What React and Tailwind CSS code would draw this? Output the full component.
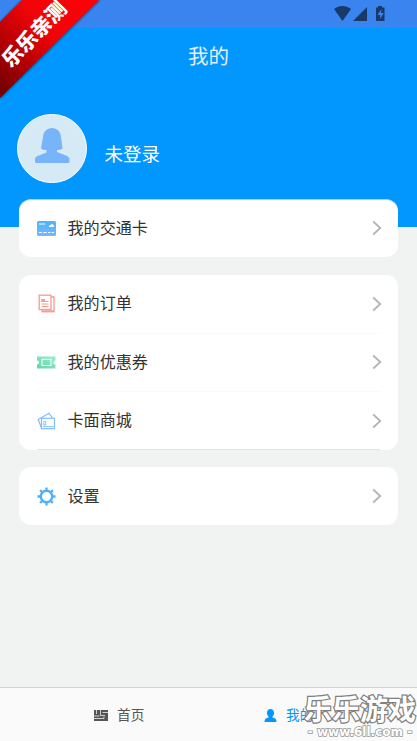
import React from 'react';

const CardIcon = () => (
  <svg className="w-[19px] h-[15px]" viewBox="0 0 19 15">
    <defs>
      <linearGradient id="cardFill" x1="0" y1="0" x2="0" y2="1">
        <stop offset="0" stopColor="#4db4f8" />
        <stop offset="1" stopColor="#78b6fb" />
      </linearGradient>
    </defs>
    <rect width="19" height="15" rx="1.5" fill="url(#cardFill)" />
    <path d="M2 3h6M2 11.5h3M6.5 11.5h3M11 11.5h2.5M14.700 11.500h2.300" stroke="#fff" strokeWidth="1.1" />
    <path d="M12 5.500c0-1.500 1.500-1.500 2-1.500 0-1.500 2-1.500 2 0 1.500 0 1.500 2 0 2h-3.500z" fill="#fff" />
  </svg>
);

const OrderIcon = () => (
  <svg className="w-[19px] h-[19px]" viewBox="0 0 19 19" fill="none" stroke="#f79a90">
    <path d="M14 3h3v14.500H5v-2" strokeWidth="1.300" />
    <path d="M5 17.300h12" strokeWidth="1.800" />
    <rect x="2.200" y="1.200" width="11.800" height="14.300" strokeWidth="1.300" />
    <path d="M4.500 5.500H8M4.500 7.500h7M4.500 10h7M4.500 12.500h7" strokeWidth="1.200" />
    <rect x="4.500" y="5" width="3.500" height="3" fill="#f79a90" stroke="none" />
  </svg>
);

const CouponIcon = () => (
  <svg className="w-[19px] h-[13px]" viewBox="0 0 19 13">
    <defs>
      <linearGradient id="couponFill" x1="1" y1="0" x2="0" y2="1">
        <stop offset="0" stopColor="#9decd0" />
        <stop offset="1" stopColor="#5fd6a7" />
      </linearGradient>
    </defs>
    <path d="M0 .5h18.500v4a2 2 0 0 0 0 4v4H0v-4a2 2 0 0 0 0-4z" fill="url(#couponFill)" />
    <rect x="5" y="3.300" width="9" height="6.200" fill="none" stroke="#fff" />
  </svg>
);

const MallIcon = () => (
  <svg className="w-[19px] h-[18px]" viewBox="0 0 19 18" fill="none" stroke="#80bdfa" strokeWidth="1.200">
    <path d="M4.500 16 1.200 7.500 12 1.200l3.500 5" />
    <rect x="4.500" y="6.300" width="13" height="10.400" />
    <rect x="6.800" y="9.700" width="2" height="3.300" strokeWidth=".9" />
    <path d="M6 14.700h10.500" strokeWidth="1" />
  </svg>
);

const GearIcon = () => (
  <svg className="w-[19px] h-[19px]" viewBox="-9.500 -9.500 19 19" stroke="#4eb1fb" fill="none">
    <circle r="5.700" strokeWidth="2.400" />
    <path
      d="M0-5.500V-9M0 5.500V9M-5.500 0H-9M5.500 0H9M-4-4l-2.400-2.400M4-4l2.400-2.400M-4 4l-2.400 2.400M4 4l2.400 2.400"
      strokeWidth="2.300"
    />
  </svg>
);

const Row = ({ icon, label }) => (
  <div className="h-[58px] flex items-center pl-[18px] pr-4">
    <div className="w-[19px] flex justify-center">{icon}</div>
    <span className="ml-3 pb-[3px] text-[16.100px] leading-6 text-[#333]">{label}</span>
    <svg className="ml-auto w-[10px] h-4" viewBox="0 0 10 16" fill="none" stroke="#b3b3b3" strokeWidth="1.700">
      <path d="M1.200 1.500 8.300 8l-7.100 6.500" />
    </svg>
  </div>
);

const App = () => {
  return (
    <div className="relative w-full h-[741px] flex flex-col overflow-hidden bg-[#f1f3f3] font-['Noto_Sans_CJK_SC',sans-serif] font-normal">
      {/* Status bar */}
      <div className="h-7 shrink-0 bg-[#3984ee] flex justify-end">
        <svg className="w-[52px] h-7 mr-[31px]" viewBox="0 0 52 28" fill="#193a68">
          <path d="M0 9c5-4 12-4 17 0l-8.500 12z" />
          <path d="M33 7v14H19z" />
          <path d="M44 6h4v1.500h2.500V21H42V7.500h2z" />
          <path d="m47.500 9-4 6h2.700v4l3.500-6H47z" fill="#3984ee" />
        </svg>
      </div>

      {/* Header */}
      <div className="h-[199px] shrink-0 bg-[#0197ff] text-white">
        <div className="h-14 pb-[2px] flex items-center justify-center text-[20.500px] text-[#e6eef3]">我的</div>
        <div className="flex items-center mt-[29.500px] ml-[17px]">
          <div className="w-[70px] h-[69.500px] rounded-full border border-white bg-[#d5eaf4]">
            <svg className="w-[68px] h-[68px]" viewBox="0 0 68 68" fill="#78b4fa">
              <path d="M34 13c5 0 8.500 3.500 9 9l1.500 11.500c-1.500 1-3.500 1.500-5.500 1.500v2L49 41q2.500 1 2.500 3v2.500q0 1.500-1.500 1.500H18.500Q17 48 17 46.500V44q0-2 2.500-3l9-3.500V35c-2 0-4-.5-5.500-1.500L25 22c.5-5.500 4-9 9-9z" />
            </svg>
          </div>
          <span className="ml-[17.500px] mt-[9px] text-[18.500px] leading-7">未登录</span>
        </div>
      </div>

      {/* Menu cards */}
      <div className="flex-1 flex flex-col gap-[17.500px] pl-[18.500px] pr-[19px] -mt-[28px]">
        <div className="bg-white rounded-xl border-t border-[#9bd6ff]">
          <div className="-mt-px">
            <Row icon={<CardIcon />} label="我的交通卡" />
          </div>
        </div>
        <div className="bg-white rounded-xl">
          <Row icon={<OrderIcon />} label="我的订单" />
          <div className="mx-[18px] h-[.5px] bg-[#fafafa]" />
          <Row icon={<CouponIcon />} label="我的优惠券" />
          <div className="mx-[18px] h-[.5px] bg-[#fafafa]" />
          <Row icon={<MallIcon />} label="卡面商城" />
          <div className="mx-[18px] -mt-px h-px bg-[#e0e3e3]" />
        </div>
        <div className="bg-white rounded-xl">
          <Row icon={<GearIcon />} label="设置" />
        </div>
      </div>

      {/* Tab bar */}
      <div className="h-[54px] shrink-0 grid grid-cols-[237px_1fr] border-t border-[#d3d3d3] bg-[#fafafa] text-[13.700px]">
        <div className="flex items-center pl-[94px] pt-[2px] text-[#555]">
          <svg className="w-[14px] h-[11px] mr-[9px]" viewBox="0 0 14 11">
            <rect width="14" height="11" fill="#555" />
            <path d="M2.500 0v4M6.500 0v5.500H11M14 2.500H8.500M0 6h5.500M0 8.500h10V6.500" fill="none" stroke="#ddd" strokeWidth=".9" />
          </svg>
          <span className="pb-[2px]">首页</span>
        </div>
        <div className="flex items-center pl-[27px] pt-[2px] text-[#0197ff]">
          <svg className="w-[13px] h-[13px] mr-[9px]" viewBox="0 0 13 13" fill="#0197ff">
            <path d="M6.500 0C9 0 10 1.800 10 4c0 1.500-.5 2.700-1.500 3.500v1c2.500.5 4 1.500 4 4.500H.5c0-3 1.500-4 4-4.500v-1C3.500 6.700 3 5.500 3 4c0-2.200 1-4 3.500-4z" />
          </svg>
          <span className="pb-[2px]">我的</span>
        </div>
      </div>

      {/* Corner ribbon */}
      <div className="absolute left-0 top-0 w-[104px] h-[104px]">
        <svg className="w-[104px] h-[104px]" viewBox="0 0 104 104">
          <defs>
            <linearGradient id="ribbonFill" gradientUnits="userSpaceOnUse" x1="85" y1="0" x2="0" y2="85">
              <stop offset="0" stopColor="#ff0008" />
              <stop offset=".4" stopColor="#f00408" />
              <stop offset=".75" stopColor="#ae0004" />
              <stop offset="1" stopColor="#780000" />
            </linearGradient>
            <filter id="ribbonShadow">
              <feGaussianBlur stdDeviation="1.300" />
            </filter>
          </defs>
          <path d="M22 0h78L0 99V22z" fill="#123" opacity=".65" filter="url(#ribbonShadow)" />
          <path d="M22 0h77L0 98V22z" fill="url(#ribbonFill)" />
        </svg>
        <span className="absolute left-[-9px] top-[19px] w-[84px] h-[28px] text-center leading-[28px] text-[20.500px] font-black text-white whitespace-nowrap -rotate-[46deg]">
          乐乐亲测
        </span>
      </div>

      {/* Watermark */}
      <div className="absolute left-[303px] top-[691px] w-[114px] text-center text-white whitespace-nowrap [paint-order:stroke_fill]">
        <div className="text-[28px] leading-[34px] font-bold [-webkit-text-stroke:2.500px_#808080]">乐乐游戏</div>
        <div className="text-[12px] leading-[14px] font-bold font-['DejaVu_Sans',sans-serif] [-webkit-text-stroke:1.500px_#999]">
          - www.6ll.com -
        </div>
      </div>
    </div>
  );
};

export default App;
